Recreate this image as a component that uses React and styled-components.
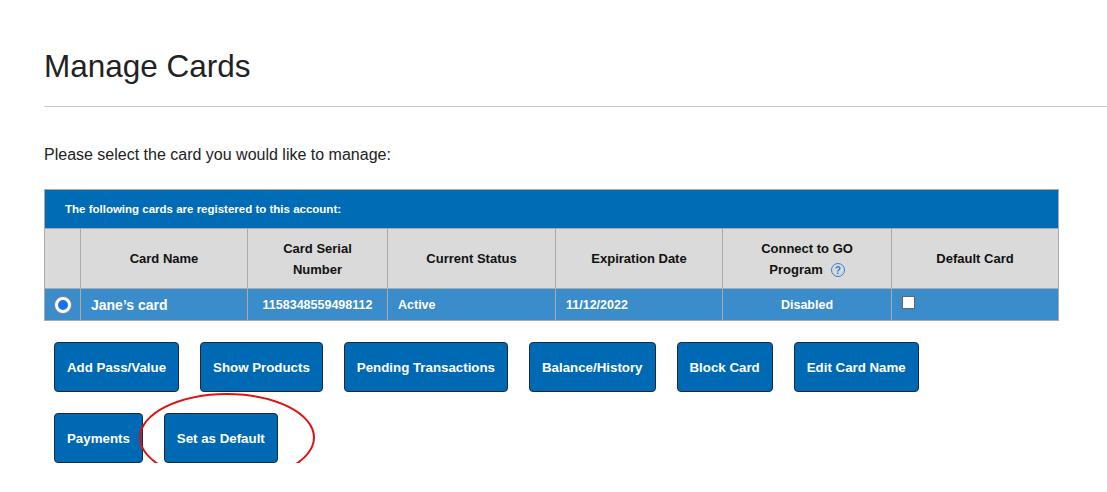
import React from 'react';
import styled, { createGlobalStyle } from 'styled-components';

const Global = createGlobalStyle`
  body { margin: 0; font-family: Arial, "Liberation Sans", sans-serif; background: #fff; }
`;

const Page = styled.div`
  padding: 0 0 0 44px;
`;

const Title = styled.h1`
  margin: 0;
  padding-top: 48px;
  height: 58px;
  font-size: 31.5px;
  font-weight: normal;
  color: #222;
  line-height: 36px;
`;

const Rule = styled.hr`
  margin: 0;
  border: none;
  border-top: 1px solid #ccc;
`;

const Lead = styled.p`
  margin: 39px 0 25px;
  font-size: 16px;
  color: #222;
  line-height: 18px;
`;

const Table = styled.table`
  border-collapse: collapse;
  width: 1015px;
  table-layout: fixed;
  font-size: 13px;
  font-weight: bold;
  border: 1px solid #aaa;
`;

const Band = styled.th`
  background: #006cb5;
  color: #fff;
  text-align: left;
  font-size: 11.5px;
  height: 38px;
  padding: 0 0 0 20px;
`;

const Head = styled.th`
  background: #dadada;
  color: #111;
  height: 59px;
  border: 1px solid #aaa;
  line-height: 21px;
  padding: 0 4px;
`;

const Cell = styled.td`
  background: #3b8ccb;
  color: #fff;
  height: 31px;
  border: 1px solid #aaa;
  padding: 0 10px;
  text-align: ${p => (p.$center ? 'center' : 'left')};
  font-size: ${p => (p.$big ? '14px' : '12.5px')};
`;

const Radio = styled.span`
  display: inline-block;
  width: 10px;
  height: 10px;
  border-radius: 50%;
  background: #1a73e8;
  border: 3px solid #fff;
  box-shadow: 0 0 0 1px #888;
  vertical-align: middle;
`;

const Check = styled.span`
  display: inline-block;
  width: 11px;
  height: 11px;
  background: #fff;
  border: 1px solid #666;
  vertical-align: middle;
  margin-top: -6px;
`;

const Help = styled.span`
  display: inline-flex;
  align-items: center;
  justify-content: center;
  width: 12px;
  height: 12px;
  border: 1.5px solid #2f7fd6;
  border-radius: 50%;
  color: #2f7fd6;
  font-size: 10px;
  margin-left: 8px;
  vertical-align: middle;
`;

const Buttons = styled.div`
  position: relative;
  display: flex;
  flex-wrap: wrap;
  gap: 21px;
  width: 880px;
  padding: 21px 0 0 10px;
`;

const Button = styled.button`
  height: 50px;
  padding: 0 12px;
  background: #0069b4;
  color: #fff;
  border: 1px solid #1a2a3a;
  border-radius: 4px;
  font-family: Arial, "Liberation Sans", sans-serif;
  font-weight: bold;
  font-size: 13.3px;
  cursor: pointer;
`;

const Ring = styled.div`
  position: absolute;
  left: 95px;
  top: 72px;
  width: 172px;
  height: 85px;
  border: 2.5px solid #e01010;
  border-radius: 50%;
  pointer-events: none;
`;

const cols = [36, 167, 140, 168, 167, 169, 167];

export default function App() {
  return (
    <Page>
      <Global />
      <Title>Manage Cards</Title>
      <Rule />
      <Lead>Please select the card you would like to manage:</Lead>
      <Table>
        <colgroup>{cols.map((w, i) => <col key={i} style={{ width: w }} />)}</colgroup>
        <thead>
          <tr><Band colSpan={7}>The following cards are registered to this account:</Band></tr>
          <tr>
            <Head />
            <Head>Card Name</Head>
            <Head>Card Serial<br />Number</Head>
            <Head>Current Status</Head>
            <Head>Expiration Date</Head>
            <Head>Connect to GO<br />Program<Help>?</Help></Head>
            <Head>Default Card</Head>
          </tr>
        </thead>
        <tbody>
          <tr>
            <Cell $center><Radio /></Cell>
            <Cell $big>Jane’s card</Cell>
            <Cell $center>1158348559498112</Cell>
            <Cell>Active</Cell>
            <Cell>11/12/2022</Cell>
            <Cell $center>Disabled</Cell>
            <Cell><Check /></Cell>
          </tr>
        </tbody>
      </Table>
      <Buttons>
        {['Add Pass/Value', 'Show Products', 'Pending Transactions', 'Balance/History', 'Block Card', 'Edit Card Name', 'Payments', 'Set as Default'].map(t => (
          <Button key={t}>{t}</Button>
        ))}
        <Ring />
      </Buttons>
    </Page>
  );
}
